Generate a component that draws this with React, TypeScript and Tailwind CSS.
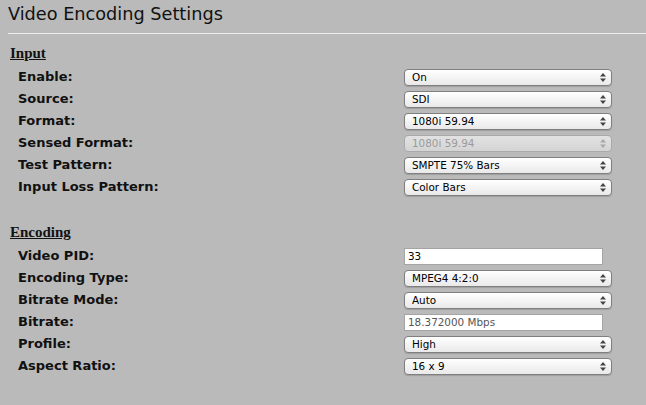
import React from "react"

type Row =
  | { label: string; kind: "select"; value: string; disabled?: boolean }
  | { label: string; kind: "input"; value: string; dim?: boolean }

const inputRows: Row[] = [
  { label: "Enable:", kind: "select", value: "On" },
  { label: "Source:", kind: "select", value: "SDI" },
  { label: "Format:", kind: "select", value: "1080i 59.94" },
  { label: "Sensed Format:", kind: "select", value: "1080i 59.94", disabled: true },
  { label: "Test Pattern:", kind: "select", value: "SMPTE 75% Bars" },
  { label: "Input Loss Pattern:", kind: "select", value: "Color Bars" },
]

const encodingRows: Row[] = [
  { label: "Video PID:", kind: "input", value: "33" },
  { label: "Encoding Type:", kind: "select", value: "MPEG4 4:2:0" },
  { label: "Bitrate Mode:", kind: "select", value: "Auto" },
  { label: "Bitrate:", kind: "input", value: "18.372000 Mbps", dim: true },
  { label: "Profile:", kind: "select", value: "High" },
  { label: "Aspect Ratio:", kind: "select", value: "16 x 9" },
]

function Arrows({ disabled }: { disabled?: boolean }) {
  return (
    <svg
      width="6"
      height="9"
      viewBox="0 0 6 9"
      className="absolute right-[6px] top-[4px] pointer-events-none"
      fill={disabled ? "#a8a8a8" : "#444"}
    >
      <path d="M3 0 L6 3.5 L0 3.5 Z" />
      <path d="M0 5.5 L6 5.5 L3 9 Z" />
    </svg>
  )
}

function Select({ value, disabled }: { value: string; disabled?: boolean }) {
  return (
    <div className="relative w-[208px] h-[17px]">
      <select
        disabled={disabled}
        defaultValue={value}
        className={`block appearance-none w-full h-full rounded-[4px] border pl-[7px] pr-[16px] py-0 text-[10.4px] leading-[15px] outline-none font-['DejaVu_Sans',sans-serif] ${
          disabled
            ? "border-[#a9a9a9] bg-gradient-to-b from-[#e2e2e2] to-[#d4d4d4] text-[#9a9a9a]"
            : "border-[#7f7f7f] bg-gradient-to-b from-white to-[#e9e9e9] text-black shadow-[0_1px_1px_rgba(0,0,0,0.15)]"
        }`}
      >
        <option>{value}</option>
      </select>
      <Arrows disabled={disabled} />
    </div>
  )
}

function TextBox({ value, dim }: { value: string; dim?: boolean }) {
  return (
    <input
      readOnly
      defaultValue={value}
      className={`block w-[199px] h-[17px] bg-white border border-[#a4a4a4] px-[3px] py-0 text-[10.4px] leading-[15px] outline-none font-['DejaVu_Sans',sans-serif] ${
        dim ? "text-[#555]" : "text-black"
      }`}
    />
  )
}

function Section({ title, rows, className }: { title: string; rows: Row[]; className: string }) {
  return (
    <div className={className}>
      <div className="h-[16px] pl-[10px] text-[15px] leading-[16px] font-bold underline text-[#111] font-['Liberation_Serif',serif]">
        {title}
      </div>
      <div className="mt-[5px]">
        {rows.map((r) => (
          <div key={r.label} className="flex items-center h-[22px]">
            <div className="w-[404px] pl-[18px] text-[13px] leading-[16px] font-bold text-[#111] font-['DejaVu_Sans',sans-serif]">
              {r.label}
            </div>
            {r.kind === "select" ? (
              <Select value={r.value} disabled={r.disabled} />
            ) : (
              <TextBox value={r.value} dim={r.dim} />
            )}
          </div>
        ))}
      </div>
    </div>
  )
}

export default function App() {
  return (
    <div className="w-[646px] h-[405px] overflow-hidden bg-[#bababa]">
      <div className="pl-[8px] pt-[3px]">
        <h1 className="text-[17.7px] leading-[22px] text-[#111] font-['DejaVu_Sans',sans-serif]">
          Video Encoding Settings
        </h1>
        <div className="mt-[8px] h-px bg-[#ececec]" />
      </div>
      <Section title="Input" rows={inputRows} className="mt-[11px]" />
      <Section title="Encoding" rows={encodingRows} className="mt-[26px]" />
    </div>
  )
}
